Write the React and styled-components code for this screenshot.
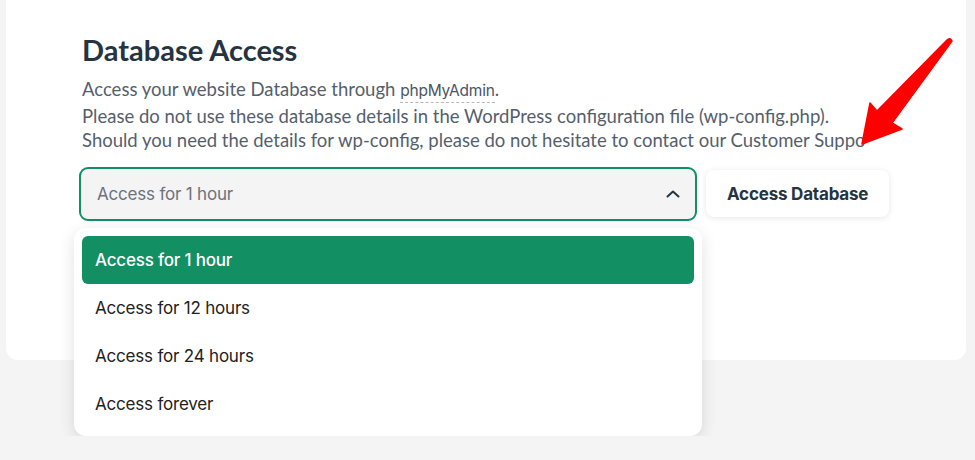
import React from 'react';
import styled, { createGlobalStyle } from 'styled-components';

const GlobalStyle = createGlobalStyle`
  html, body {
    margin: 0;
    padding: 0;
    background: #f4f4f4;
    overflow: hidden;
  }
  * { box-sizing: border-box; }
`;

const Page = styled.div`
  position: relative;
  width: 975px;
  height: 460px;
  padding-left: 6px;
`;

const Card = styled.section`
  width: 960px;
  height: 384px;
  margin-top: -24px;
  padding: 56px 0 0 76px;
  background: #fff;
  border-radius: 12px;
`;

const Title = styled.h2`
  margin: 0 0 9px;
  font-family: Lato, 'Noto Sans', sans-serif;
  font-weight: 700;
  font-size: 29px;
  line-height: 36px;
  color: #263341;
`;

/* the last sentence runs out of view under the pointer in the original */
const Text = styled.p`
  margin: 0;
  max-width: 784px;
  overflow: hidden;
  font-family: Lato, 'Noto Sans', sans-serif;
  font-size: 18.5px;
  line-height: 24.5px;
  color: #555f6b;
  white-space: nowrap;
`;

const Term = styled.span`
  font-family: Inter, 'Noto Sans', sans-serif;
  font-size: 15.5px;
  letter-spacing: -0.2px;
  color: #4a5563;
  border-bottom: 1px dashed #b8b8b8;
  padding-bottom: 2px;
`;

const Row = styled.div`
  display: flex;
  align-items: center;
  gap: 9px;
  margin: 14px 0 0 -3px;
`;

const SelectBox = styled.div`
  position: relative;
  width: 618px;
  height: 54px;
  display: flex;
  align-items: center;
  justify-content: space-between;
  padding: 0 15px 0 16px;
  background: #f4f4f4;
  border: 2px solid #128f63;
  border-radius: 9px;
  font-family: Inter, 'Noto Sans', sans-serif;
  font-size: 17px;
  letter-spacing: -0.2px;
  color: #6b7280;
`;

const Button = styled.button`
  height: 47px;
  padding: 0 21px;
  background: #fff;
  border: none;
  border-radius: 8px;
  box-shadow: 0 1px 6px rgba(0, 0, 0, 0.1);
  font-family: Inter, 'Noto Sans', sans-serif;
  font-weight: 700;
  font-size: 17px;
  letter-spacing: -0.2px;
  color: #263341;
  cursor: pointer;
`;

const Menu = styled.ul`
  position: absolute;
  top: 59px;
  left: -7px;
  width: 628px;
  margin: 0;
  padding: 8px;
  list-style: none;
  background: #fff;
  border-radius: 12px;
  box-shadow: 0 4px 16px rgba(0, 0, 0, 0.12);
  z-index: 2;
`;

const Option = styled.li`
  height: 48px;
  display: flex;
  align-items: center;
  padding: 0 13px;
  border-radius: 6px;
  font-family: Inter, 'Noto Sans', sans-serif;
  font-size: 17px;
  letter-spacing: -0.2px;
  font-weight: ${(p) => (p.active ? 500 : 400)};
  color: ${(p) => (p.active ? '#fff' : '#222')};
  background: ${(p) => (p.active ? '#128f63' : 'transparent')};
`;

const Pointer = styled.svg`
  position: absolute;
  left: 855px;
  top: 58px;
  z-index: 3;
`;

const options = ['Access for 1 hour', 'Access for 12 hours', 'Access for 24 hours', 'Access forever'];

const Chevron = () => (
  <svg width="14" height="8" viewBox="0 0 14 8" fill="none">
    <path d="M1.5 6.5L7 1.5l5.5 5" stroke="#263341" strokeWidth="2" strokeLinecap="round" strokeLinejoin="round" />
  </svg>
);

const App = () => {
  return (
    <Page>
      <GlobalStyle />
      <Card>
        <Title>Database Access</Title>
        <Text>
          Access your website Database through <Term>phpMyAdmin</Term>.
        </Text>
        <Text>Please do not use these database details in the WordPress configuration file (wp-config.php).</Text>
        <Text>Should you need the details for wp-config, please do not hesitate to contact our Customer Support.</Text>
        <Row>
          <SelectBox>
            Access for 1 hour
            <Chevron />
            <Menu>
              {options.map((o, i) => (
                <Option key={o} active={i === 0}>{o}</Option>
              ))}
            </Menu>
          </SelectBox>
          <Button type="button">Access Database</Button>
        </Row>
      </Card>
      <Pointer width="100" height="116" viewBox="0 0 100 116">
        <path
          d="M7 110 L15 69 L22 77 L92 6 Q95 3 97 7 L37 89 L47 95 Z"
          fill="#ff0000"
          stroke="#ff0000"
          strokeWidth="1.5"
          strokeLinejoin="round"
        />
      </Pointer>
    </Page>
  );
};

export default App;
